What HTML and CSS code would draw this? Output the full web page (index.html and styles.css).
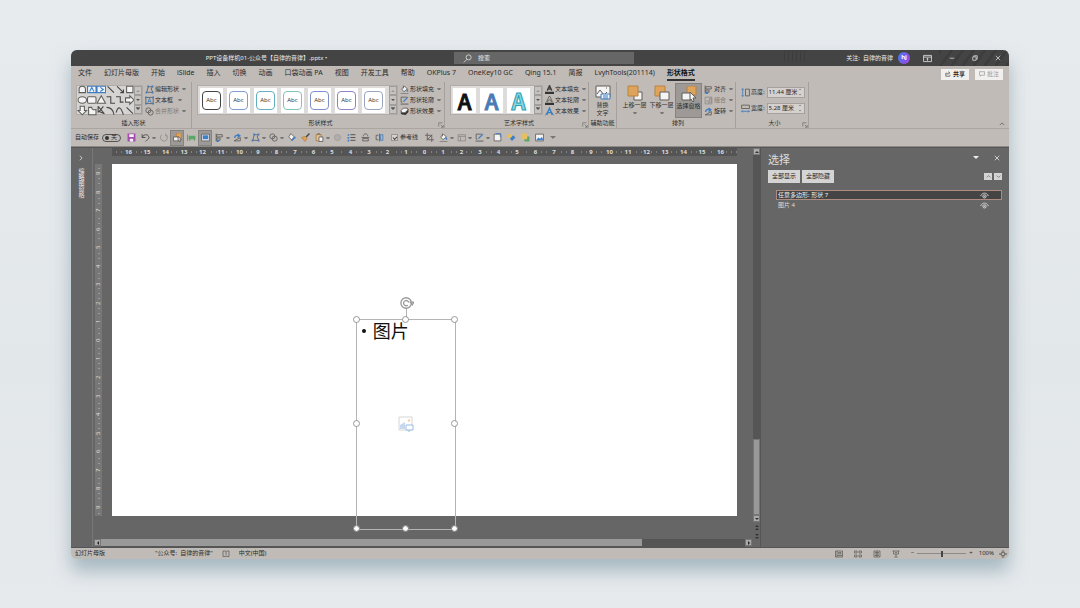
FILE: index.html
```html
<!DOCTYPE html>
<html lang="zh-CN">
<head>
<meta charset="utf-8">
<title>PPT设备样机01-公众号【自律的音律】.pptx</title>
<link rel="stylesheet" href="styles.css">
</head>
<body>
<svg class="sprite" aria-hidden="true">
  <symbol id="search" viewBox="0 0 16 16"><circle cx="10" cy="6" r="4.5"/><path d="M7 9.500 1.500 15"/></symbol>
  <symbol id="ribbonopt" viewBox="0 0 16 16"><path d="M1 2.500h14v11H1zM1 5.500h14M8 12V7.500M6 9.500l2-2 2 2"/></symbol>
  <symbol id="min" viewBox="0 0 16 16"><path d="M2 8.500h12"/></symbol>
  <symbol id="restore" viewBox="0 0 16 16"><path d="M2 5h9v9H2zM5 5V2h9v9h-3"/></symbol>
  <symbol id="close" viewBox="0 0 16 16"><path d="m2 2 12 12M14 2 2 14"/></symbol>
  <symbol id="share" viewBox="0 0 16 16"><path d="M6 6H2v8h11v-4M5 11c0-4 3-6 7-6M9 1.500 13 5 9 8.500"/></symbol>
  <symbol id="comment" viewBox="0 0 16 16"><path d="M1 2h14v9H7l-3 3v-3H1z"/></symbol>
  <symbol id="editshape" viewBox="0 0 16 16"><path d="M6 3h7l-2 4 3 6H3z"/><path class="bluef" d="M4 1h3v3H4zM12 1h3v3h-3zM1 12h3v3H1zM12 12h3v3h-3z"/></symbol>
  <symbol id="textbox" viewBox="0 0 16 16"><path d="M1.500 2.500h13v11h-13z"/><path class="blue" d="m5 12 3-8 3 8M6 9.500h4"/><path class="bluef" d="M0 1h3v3H0zM13 1h3v3h-3zM0 12h3v3H0zM13 12h3v3h-3z"/></symbol>
  <symbol id="merge" viewBox="0 0 16 16"><circle cx="6" cy="6" r="4.500"/><circle cx="10" cy="10" r="4.500"/></symbol>
  <symbol id="fill" viewBox="0 0 16 16"><path class="whitef" d="m8 2 5 5-6 5-4-5z"/><path d="M6 1v5"/><path class="bluef" d="M13 7c3 3 2 5 0 5s-2-3 0-5z"/><path class="greyf" d="M1 14h14v2H1z"/></symbol>
  <symbol id="outline" viewBox="0 0 16 16"><path d="M12 2H2v9h2"/><path class="blue thick" d="m6 10 8-8"/><path class="greyf" d="M1 13h14v3H1z"/></symbol>
  <symbol id="effect" viewBox="0 0 16 16"><path class="darkf" d="m1 8 6-2 8-3v6l-5 5-8-1z"/><path class="whitef" d="m2 6 4-4h7l1 3-5 5H3z"/></symbol>
  <symbol id="afill" viewBox="0 0 16 16"><path class="dark thick" d="m4 10 4-9 4 9M5 7h6"/><path class="darkf" d="M0 12h16v4H0z"/></symbol>
  <symbol id="aoutline" viewBox="0 0 16 16"><path d="m3 10 4-9h2l4 9h-2l-1-3H6l-1 3z"/><path class="darkf" d="M0 12h16v4H0z"/></symbol>
  <symbol id="aeffect" viewBox="0 0 16 16"><path class="blue thick" d="m3 14 5-12 5 12M5 10h6"/><path class="blue" d="m1 15 2-5M15 15l-2-5"/></symbol>
  <symbol id="alt" viewBox="0 0 16 16"><path class="whitef" d="M1 1h14v11H1z"/><path d="m2 9 3-4 4 5 3-3M11 3h1"/><path class="bluew" d="M6 9h9v5H6zM8 11h5M8 13h5"/></symbol>
  <symbol id="forward" viewBox="0 0 16 16"><path class="whitef" d="M7 7h8v8H7z"/><path class="orange" d="M1 1h10v10H1z"/></symbol>
  <symbol id="backward" viewBox="0 0 16 16"><path class="orange" d="M1 1h10v10H1z"/><path class="whitef" d="M6 7h9v8H6z"/></symbol>
  <symbol id="selpane" viewBox="0 0 16 16"><path class="orange" d="M6 0h9v9H6z"/><path class="whitef" d="M1 7h9v7H1z"/><path class="whitef" d="m9 6 6 6h-3l1 3-1 1-2-3-1 1z"/></symbol>
  <symbol id="align" viewBox="0 0 16 16"><path d="M2 1v14M3 3h10v4H3zM3 9h6v4H3z"/><path class="blue thick" d="M7 15H3M6 12l-3 3"/></symbol>
  <symbol id="group" viewBox="0 0 16 16"><path class="greyed" d="M2 2h12v12H2zM4 9h6V4h3v7H8v2"/></symbol>
  <symbol id="rotate" viewBox="0 0 16 16"><path d="m2 14 11-6v6z"/><path class="blue thick" d="M3 9c0-5 5-6 8-4M8 2l4 3-4 3"/></symbol>
  <symbol id="height" viewBox="0 0 16 16"><path d="M8 2h7v12H8z"/><path class="blue" d="M3 1v14M1 3l2-2 2 2M1 13l2 2 2-2"/></symbol>
  <symbol id="width" viewBox="0 0 16 16"><path d="M1 2h14v6H1z"/><path class="blue" d="M1 13h14M3 11l-2 2 2 2M13 11l2 2-2 2"/></symbol>
  <symbol id="launch" viewBox="0 0 16 16"><path d="M2 12V2h10M7 7l7 7M14 8v6H8"/></symbol>
  <symbol id="up" viewBox="0 0 16 16"><path d="m2 11 6-6 6 6"/></symbol>
  <symbol id="down" viewBox="0 0 16 16"><path d="m2 5 6 6 6-6"/></symbol>
  <symbol id="right" viewBox="0 0 16 16"><path d="m5 2 6 6-6 6"/></symbol>
  <symbol id="save" viewBox="0 0 16 16"><path class="purple" d="M1 1h14v14H1z"/><path class="whitefill" d="M4 2h8v5H4zM5 10h6v5H5z"/></symbol>
  <symbol id="undo" viewBox="0 0 16 16"><path class="dark" d="M2 2v6h6M2 8c4-8 12-5 12 0 0 4-4 4-6 7"/></symbol>
  <symbol id="redo" viewBox="0 0 16 16"><path class="greyed" d="M12 1v4h3M13 4c5 6-1 12-6 10S1 6 5 3"/></symbol>
  <symbol id="green" viewBox="0 0 16 16"><path class="greenf" d="M3 5h12v6H3z"/><path class="green" d="M1 3v11M5 14V9M13 14V9"/></symbol>
  <symbol id="screen" viewBox="0 0 16 16"><path class="whitef" d="M1 2h14v12H1z"/><path class="bluef" d="M3 4h10v7H3z"/></symbol>
  <symbol id="pen" viewBox="0 0 16 16"><path class="whitef" d="m7 1 6 6-5 5-5-5z"/><path class="blue thick" d="m8 14 7-7"/></symbol>
  <symbol id="brush" viewBox="0 0 16 16"><path class="orange" d="m1 8 6-2 4 4-4 5z"/><path class="dark thick" d="m9 7 6-6"/></symbol>
  <symbol id="paste" viewBox="0 0 16 16"><path class="tan" d="M2 3h9v11H2z"/><path class="whitef" d="M7 7h7v8H7z"/><path d="M4 3c0-3 5-3 5 0"/></symbol>
  <symbol id="dot" viewBox="0 0 16 16"><circle class="dim" cx="8" cy="8" r="5.500"/></symbol>
  <symbol id="list" viewBox="0 0 16 16"><path class="dark" d="M6 3h9M6 8h9M6 13h9"/><path class="bluef" d="M1 2h3v3H1zM1 7h3v3H1zM1 12h3v3H1z"/></symbol>
  <symbol id="flip" viewBox="0 0 16 16"><path d="M1 8h14M4 6c0-6 8-6 8 0M3 10h10v4H3z"/></symbol>
  <symbol id="fliph" viewBox="0 0 16 16"><path d="M8 1v14M6 4H2v8h4"/><path class="blue" d="M10 3h4v10h-4z"/></symbol>
  <symbol id="crop" viewBox="0 0 16 16"><path d="M4 0v12h12M0 4h12v12M3 13 13 3"/></symbol>
  <symbol id="table" viewBox="0 0 16 16"><path class="greyed" d="M2 3h13v11H2zM2 6h13M6 6v8"/></symbol>
  <symbol id="page" viewBox="0 0 16 16"><path class="whitef" d="M2 2h12v12H2z"/><path class="blue" d="M5 1h8v6"/></symbol>
  <symbol id="shapes" viewBox="0 0 16 16"><path class="gold" d="M1 2h8v7H1z"/><path class="bluef" d="m11 4 4 4-6 6-4-4z"/></symbol>
  <symbol id="layer" viewBox="0 0 16 16"><path class="greenf" d="M6 6h9v9H6z"/><path class="gold" d="M1 1h10v10H1z"/></symbol>
  <symbol id="picture" viewBox="0 0 16 16"><path class="whitef" d="M1 2h14v12H1z"/><path class="bluef" d="m2 13 4-5 3 2 3-3 2 3v3z"/></symbol>
  <symbol id="eye" viewBox="0 0 16 16"><path d="M1 9c3-7 11-7 14 0"/><circle cx="8" cy="9.500" r="3"/><circle cx="8" cy="9.500" r=".8"/></symbol>
  <symbol id="spell" viewBox="0 0 16 16"><path d="M8 3v8M2 2h5l1 1 1-1h5v11H9l-1 1-1-1H2z"/></symbol>
  <symbol id="normal" viewBox="0 0 16 16"><path d="M1 2h14v12H1zM4 2v12M4 11h11M7 5h5v3H7z"/></symbol>
  <symbol id="sorter" viewBox="0 0 16 16"><path d="M1 2h5v4H1zM10 2h5v4h-5zM1 10h5v4H1zM10 10h5v4h-5z"/></symbol>
  <symbol id="reading" viewBox="0 0 16 16"><path d="M2 2h12v12H2zM8 2v12M4 5h8M4 8h8M4 11h8"/></symbol>
  <symbol id="show" viewBox="0 0 16 16"><path d="M1 2h14M3 2v6h10V2M8 8v6M5 14h6M6 5h4"/></symbol>
  <symbol id="fit" viewBox="0 0 16 16"><path d="M8 1v14M1 8h14M6 3l2-2 2 2M6 13l2 2 2-2M3 6 1 8l2 2M13 6l2 2-2 2"/><path class="ribbonf" d="M5 5h6v6H5z"/></symbol>
  <symbol id="gallery" viewBox="0 0 54 30">
    <g class="whitef"><path d="M2 8V5q0-3 3-3t3 3v3zM47 2h6v6h-6z"/><ellipse cx="5" cy="15" rx="4" ry="3"/><rect x="10" y="12" width="8" height="6" rx="1"/><path d="m23 11 4 7h-8zM46 13h4v-2l4 4-4 4v-2h-4zM3 21h4v4h2l-4 4-4-4h2zM11 22h3q0 3 4 2v5h-7z"/></g>
    <path class="bluew" d="M10 2h8v6h-8zM19 2h8v6h-8z"/><path class="blue" d="m12 7 2-4 2 4M22 3l3 2-3 2"/>
    <path class="dark" d="m29 2 6 6M38 2l6 6M44 5v3h-3M28 12h4v6h4M37 12h4v5h3M20 21l6 7M25 21l-4 5 5 2M20 21v6M28 22q6 0 7 7M37 27q3-10 7 2M47 22l6 6"/>
  </symbol>
  <symbol id="placeholder" viewBox="0 0 16 16"><path class="phgrey" d="M1 1h13v13H1z"/><path class="phblue" d="M2 13V9l5-3v7z"/><circle class="phorange" cx="11" cy="4.500" r="1.200"/><path class="phline" d="M8 9h7v5H8zM11 14v2"/></symbol>
  <symbol id="spin" viewBox="0 0 16 16"><circle class="spinbg" cx="7" cy="8" r="6"/><path class="spinln" d="M9 10.500a3 3 0 1 1 1-3M12 7h4l-2 3z"/></symbol>
</svg>

<div class="window">
  <header class="titlebar">
    <div class="doc-title">PPT设备样机01-公众号【自律的音律】.pptx •</div>
    <label class="search"><svg class="icon"><use href="#search"/></svg><input type="text" placeholder="搜索" aria-label="搜索"></label>
    <div class="account">
      <span>关注:&nbsp; 自律的音律</span><span class="avatar">hj</span>
      <button aria-label="功能区显示选项"><svg class="icon"><use href="#ribbonopt"/></svg></button>
      <button aria-label="最小化"><svg class="icon small"><use href="#min"/></svg></button>
      <button aria-label="还原"><svg class="icon small"><use href="#restore"/></svg></button>
      <button aria-label="关闭"><svg class="icon small"><use href="#close"/></svg></button>
    </div>
  </header>

  <nav class="tabs">
    <button>文件</button><button>幻灯片母版</button><button>开始</button><button>iSlide</button><button>插入</button><button>切换</button><button>动画</button><button>口袋动画 PA</button><button>视图</button><button>开发工具</button><button>帮助</button><button>OKPlus 7</button><button>OneKey10 GC</button><button>Qing 15.1</button><button>简报</button><button>LvyhTools(201114)</button><button class="active">形状格式</button>
    <div class="tab-actions">
      <button class="strong"><svg class="icon small"><use href="#share"/></svg>共享</button>
      <button class="muted"><svg class="icon small"><use href="#comment"/></svg>批注</button>
    </div>
  </nav>

  <div class="ribbon">
    <section class="group insert">
      <div class="group-body">
        <div class="gallery shapes"><svg class="shape-grid"><use href="#gallery"/></svg>
          <div class="scroller"><button class="off" aria-label="上"></button><button aria-label="下"></button><button class="more" aria-label="更多"></button></div></div>
        <div class="stack">
          <button><svg class="icon"><use href="#editshape"/></svg>编辑形状<i class="caret"></i></button>
          <button><svg class="icon"><use href="#textbox"/></svg>文本框&nbsp;<i class="caret"></i></button>
          <button class="disabled"><svg class="icon"><use href="#merge"/></svg>合并形状<i class="caret"></i></button>
        </div>
      </div>
      <div class="group-label">插入形状</div>
    </section>
    <section class="group styles">
      <div class="group-body">
        <div class="gallery cards">
          <button class="card c1">Abc</button><button class="card c2">Abc</button><button class="card c3">Abc</button><button class="card c4">Abc</button><button class="card c5">Abc</button><button class="card c6">Abc</button><button class="card c7">Abc</button>
          <div class="scroller"><button class="off" aria-label="上"></button><button aria-label="下"></button><button class="more" aria-label="更多"></button></div>
        </div>
        <div class="stack">
          <button><svg class="icon"><use href="#fill"/></svg>形状填充<i class="caret"></i></button>
          <button><svg class="icon"><use href="#outline"/></svg>形状轮廓<i class="caret"></i></button>
          <button><svg class="icon"><use href="#effect"/></svg>形状效果<i class="caret"></i></button>
        </div>
      </div>
      <div class="group-label">形状样式<svg class="launcher"><use href="#launch"/></svg></div>
    </section>
    <section class="group wordart">
      <div class="group-body">
        <div class="gallery cards">
          <button class="letter w1">A</button><button class="letter w2">A</button><button class="letter w3">A</button>
          <div class="scroller"><button class="off" aria-label="上"></button><button aria-label="下"></button><button class="more" aria-label="更多"></button></div>
        </div>
        <div class="stack">
          <button><svg class="icon"><use href="#afill"/></svg>文本填充<i class="caret"></i></button>
          <button><svg class="icon"><use href="#aoutline"/></svg>文本轮廓<i class="caret"></i></button>
          <button><svg class="icon"><use href="#aeffect"/></svg>文本效果<i class="caret"></i></button>
        </div>
      </div>
      <div class="group-label">艺术字样式<svg class="launcher"><use href="#launch"/></svg></div>
    </section>
    <section class="group access">
      <div class="group-body"><button class="big"><svg><use href="#alt"/></svg>替换<br>文字</button></div>
      <div class="group-label">辅助功能</div>
    </section>
    <section class="group arrange">
      <div class="group-body">
        <button class="big"><svg><use href="#forward"/></svg>上移一层<i class="caret"></i></button>
        <button class="big"><svg><use href="#backward"/></svg>下移一层<i class="caret"></i></button>
        <button class="big pressed"><svg><use href="#selpane"/></svg>选择窗格</button>
        <div class="stack">
          <button><svg class="icon"><use href="#align"/></svg>对齐<i class="caret"></i></button>
          <button class="disabled"><svg class="icon"><use href="#group"/></svg>组合<i class="caret"></i></button>
          <button><svg class="icon"><use href="#rotate"/></svg>旋转<i class="caret"></i></button>
        </div>
      </div>
      <div class="group-label">排列</div>
    </section>
    <section class="group size">
      <div class="group-body">
        <label><svg class="icon"><use href="#height"/></svg>高度:<span class="spinbox"><input type="text" value="11.44 厘米"><span class="arrows"><svg><use href="#up"/></svg><svg><use href="#down"/></svg></span></span></label>
        <label><svg class="icon"><use href="#width"/></svg>宽度:<span class="spinbox"><input type="text" value="5.28 厘米"><span class="arrows"><svg><use href="#up"/></svg><svg><use href="#down"/></svg></span></span></label>
      </div>
      <div class="group-label">大小<svg class="launcher"><use href="#launch"/></svg></div>
    </section>
    <button class="collapse" aria-label="折叠功能区"><svg class="icon small"><use href="#up"/></svg></button>
  </div>

  <div class="quickbar">
    <label class="autosave">自动保存<span class="toggle"><input type="checkbox">关</span></label>
    <button aria-label="保存"><svg class="icon"><use href="#save"/></svg></button>
    <button aria-label="撤消"><svg class="icon"><use href="#undo"/></svg></button><i class="caret"></i>
    <button aria-label="重做"><svg class="icon"><use href="#redo"/></svg></button>
    <button class="pressed" aria-label="选择窗格"><svg class="icon"><use href="#selpane"/></svg></button>
    <button aria-label="动画"><svg class="icon"><use href="#green"/></svg></button>
    <button class="pressed" aria-label="母版"><svg class="icon"><use href="#screen"/></svg></button>
    <button aria-label="对齐"><svg class="icon"><use href="#align"/></svg></button><i class="caret"></i>
    <button aria-label="旋转"><svg class="icon"><use href="#rotate"/></svg></button><i class="caret"></i>
    <button aria-label="编辑形状"><svg class="icon"><use href="#editshape"/></svg></button><i class="caret"></i>
    <button aria-label="合并形状"><svg class="icon"><use href="#merge"/></svg></button><i class="caret"></i>
    <button aria-label="取色"><svg class="icon"><use href="#pen"/></svg></button>
    <button aria-label="格式刷"><svg class="icon"><use href="#brush"/></svg></button>
    <button aria-label="粘贴"><svg class="icon"><use href="#paste"/></svg></button><i class="caret"></i>
    <button aria-label="录制"><svg class="icon"><use href="#dot"/></svg></button>
    <button aria-label="列表"><svg class="icon"><use href="#list"/></svg></button>
    <button aria-label="垂直翻转"><svg class="icon"><use href="#flip"/></svg></button>
    <button aria-label="水平翻转"><svg class="icon"><use href="#fliph"/></svg></button>
    <label class="guides"><input type="checkbox" checked>参考线</label>
    <button aria-label="裁剪"><svg class="icon"><use href="#crop"/></svg></button>
    <button aria-label="填充"><svg class="icon"><use href="#fill"/></svg></button><i class="caret"></i>
    <button aria-label="表格"><svg class="icon"><use href="#table"/></svg></button><i class="caret"></i>
    <button aria-label="轮廓"><svg class="icon"><use href="#outline"/></svg></button><i class="caret"></i>
    <button aria-label="页面"><svg class="icon"><use href="#page"/></svg></button>
    <button aria-label="形状"><svg class="icon"><use href="#shapes"/></svg></button>
    <button aria-label="图层"><svg class="icon"><use href="#layer"/></svg></button>
    <button aria-label="图片"><svg class="icon"><use href="#picture"/></svg></button>
    <button aria-label="自定义"><i class="caret wide"></i></button>
  </div>

  <main class="workspace">
    <aside class="thumbs"><svg class="icon small"><use href="#right"/></svg><span>缩略图窗格</span></aside>
    <div class="editor">
      <div class="ruler-h"><span>16</span><span>15</span><span>14</span><span>13</span><span>12</span><span>11</span><span>10</span><span>9</span><span>8</span><span>7</span><span>6</span><span>5</span><span>4</span><span>3</span><span>2</span><span>1</span><span>0</span><span>1</span><span>2</span><span>3</span><span>4</span><span>5</span><span>6</span><span>7</span><span>8</span><span>9</span><span>10</span><span>11</span><span>12</span><span>13</span><span>14</span><span>15</span><span>16</span></div>
      <div class="canvas">
        <div class="ruler-v"><span>9</span><span>8</span><span>7</span><span>6</span><span>5</span><span>4</span><span>3</span><span>2</span><span>1</span><span>0</span><span>1</span><span>2</span><span>3</span><span>4</span><span>5</span><span>6</span><span>7</span><span>8</span><span>9</span></div>
        <div class="slide">
          <div class="frame">
            <p>图片</p>
            <svg class="ph"><use href="#placeholder"/></svg>
            <svg class="spin"><use href="#spin"/></svg>
            <b class="h n w"></b><b class="h n c"></b><b class="h n e"></b><b class="h m w"></b><b class="h m e"></b><b class="h s w"></b><b class="h s c"></b><b class="h s e"></b>
          </div>
        </div>
      </div>
      <div class="scroll-h"><button aria-label="左"><i class="tri left"></i></button><div class="track"><div class="thumb"></div></div><button aria-label="右"><i class="tri right"></i></button></div>
    </div>
    <div class="scroll-v"><button aria-label="上"><i class="tri up"></i></button><div class="track"><div class="thumb"></div></div><button aria-label="下"><i class="tri"></i></button>
      <div class="pager"><i class="tri up"></i><i class="tri up"></i><i class="tri gap"></i><i class="tri"></i></div></div>
    <aside class="pane">
      <div class="pane-head"><h2>选择</h2><i class="tri"></i><button aria-label="关闭"><svg class="icon small"><use href="#close"/></svg></button></div>
      <div class="pane-actions"><button>全部显示</button><button>全部隐藏</button><div class="order"><button aria-label="上移"><svg><use href="#up"/></svg></button><button aria-label="下移"><svg><use href="#down"/></svg></button></div></div>
      <ul>
        <li class="selected"><span>任意多边形: 形状 7</span><svg class="icon"><use href="#eye"/></svg></li>
        <li><span>图片 4</span><svg class="icon"><use href="#eye"/></svg></li>
      </ul>
    </aside>
  </main>

  <footer class="statusbar">
    <span class="mode">幻灯片母版</span><span>"公众号:&nbsp; 自律的音律"</span><svg class="icon"><use href="#spell"/></svg><span>中文(中国)</span>
    <div class="views"><svg class="icon"><use href="#normal"/></svg><svg class="icon"><use href="#sorter"/></svg><svg class="icon"><use href="#reading"/></svg><svg class="icon"><use href="#show"/></svg></div>
    <div class="zoom"><span>−</span><input type="range" min="0" max="100" value="50" aria-label="缩放"><span>+</span><span class="pct">100%</span><svg class="icon"><use href="#fit"/></svg></div>
  </footer>
</div>
</body>
</html>
```
FILE: styles.css
```css
* { box-sizing: border-box; }
body { margin: 0; padding: 50px 71px; background: linear-gradient(#e7ebee, #e2e7ea 60%, #e6eaed); font: 6px/9px "Noto Sans", "Noto Sans CJK SC", sans-serif; color: #2b2a29; }
button, input { font: inherit; color: inherit; border: 0; padding: 0; margin: 0; background: none; }
button { display: flex; align-items: center; justify-content: center; white-space: nowrap; }
.sprite { position: absolute; width: 0; height: 0; }
svg { fill: none; stroke: #5f5d59; stroke-width: 1.5; flex: none; }
.icon { width: 9px; height: 9px; }
.icon.small { width: 6px; height: 6px; stroke-width: 2; }
.blue { stroke: #3f7cc0; }
.thick { stroke-width: 2.500; }
.bluef { fill: #3f7fc8; stroke: none; }
.bluew { fill: #eef4fa; stroke: #3f7cc0; }
.whitef { fill: #f4f4f4; }
.whitefill { fill: #f4f4f4; stroke: none; }
.greyf { fill: #8b8987; stroke: none; }
.dark { stroke: #444; }
.darkf { fill: #333; stroke: none; }
.greyed { stroke: #8d8a87; }
.orange { fill: #dfa45c; stroke: #b98243; }
.tan { fill: #e6c495; stroke: #a97c45; }
.gold { fill: #e6bf62; stroke: none; }
.purple { fill: #a44cb0; stroke: none; }
.green { stroke: #4d9a5b; }
.greenf { fill: #5da66b; stroke: none; }
.dim { fill: #b1adaa; stroke: #a09c99; }
.ribbonf { fill: #c0bbb7; }

.window { border-radius: 6px; overflow: hidden; background: #c0bbb7; box-shadow: 0 12px 18px rgba(105, 135, 150, .5); }

.titlebar { display: grid; grid-template-columns: 383fr 180fr 375fr; align-items: center; height: 16px; background: #444; color: #eee; }
.titlebar svg { stroke: #ddd; }
.doc-title { text-align: center; padding-left: 8px; }
.search { display: flex; align-items: center; gap: 6px; height: 12px; padding-left: 9px; background: #666; }
.search input { flex: 1; min-width: 0; }
.search input::placeholder { color: #eee; opacity: 1; }
.account { display: flex; align-items: center; justify-content: flex-end; align-self: stretch; padding-right: 8px; gap: 17px; background: repeating-linear-gradient(125deg, #3d3d3d 0 3px, transparent 3px 9px) right / 70px 100% no-repeat, repeating-linear-gradient(90deg, #3d3d3d 0 1px, transparent 1px 4px) 150px 0 / 24px 12px no-repeat; }
.account > span:first-child { margin-right: -12px; }
.avatar { width: 12px; height: 12px; border-radius: 50%; background: linear-gradient(120deg, #3d7df0, #a843e0); color: #fff; font-weight: bold; text-align: center; line-height: 11px; margin-right: -4px; }

.tabs { display: flex; gap: 12px; height: 16px; padding: 0 6px 0 7px; font-size: 7px; }
.tabs > button { height: 15px; border-bottom: 2px solid transparent; }
.tabs > .active { font-weight: bold; border-color: #333; color: #111; }
.tab-actions { display: flex; align-items: center; gap: 6px; margin-left: auto; font-size: 6px; }
.tab-actions button { width: 28px; height: 11px; gap: 2px; background: #f1f0ef; }
.strong { font-weight: bold; }
.muted { color: #999; }
.muted svg { stroke: #999; }

.ribbon { display: flex; height: 47px; border-bottom: 1px solid #aaa5a1; }
.group { display: flex; flex-direction: column; border-right: 1px solid #a5a09c; }
.group-body { display: flex; height: 36px; align-items: center; }
.group-label { position: relative; text-align: center; height: 9px; line-height: 9px; margin-top: 1px; }
.launcher { position: absolute; right: 0; bottom: 0; width: 6px; height: 6px; }
.insert { padding-left: 5px; width: 121px; }
.styles { padding-left: 5px; width: 253px; }
.wordart { padding-left: 5px; width: 144px; }
.access { width: 28px; }
.access .group-body, .access .big { width: 100%; }
.arrange { padding-left: 4px; width: 119px; }
.size { padding-left: 5px; width: 73px; }
.gallery { display: flex; align-items: center; height: 30px; background: #d6d4d2; border: 1px solid #b0aca9; }
.shapes { width: 67px; }
.shape-grid { width: 57px; height: 32px; margin: -2px 0; stroke-width: 1; }
.gallery.cards { gap: 4px; padding-left: 2px; background: #dedcda; }
.scroller { display: flex; flex-direction: column; width: 8px; align-self: stretch; margin-left: auto; }
.scroller button { flex: 1; border: 1px solid #a29e9b; background: #c6c2bf; }
.scroller button::after { content: ""; border: 2px solid transparent; border-top-color: #555; border-bottom: 0; }
.scroller .off::after { border-top: 0; border-bottom: 2px solid #999; }
.scroller .more::after { box-shadow: 0 -1px #777; }
.card { width: 23px; height: 25px; background: #fff; position: relative; font-family: "Open Sans", sans-serif; }
.card::before { content: ""; position: absolute; inset: 3px 2px; border: 1px solid; border-radius: 4px; }
.c1::before { border-color: #444; }
.c2::before { border-color: #7f9ed0; }
.c3::before { border-color: #63afc0; }
.c4::before { border-color: #84c4b4; }
.c5::before { border-color: #7d90cc; }
.c6::before { border-color: #9283c4; }
.c7::before { border-color: #9aa6c0; }
.letter { width: 23px; height: 25px; background: #fff; font: 500 22px/25px "Noto Sans CJK SC", sans-serif; -webkit-text-stroke: 1px; }
.w1 { color: #111; }
.w2 { color: #4b7bb5; }
.w3 { color: #8ad6e0; -webkit-text-stroke: 1px #2ba0b4; font-weight: bold; }
.stack { display: flex; flex-direction: column; gap: 2px; padding-left: 2px; }
.stack button { height: 9px; justify-content: flex-start; gap: 1px; }
.disabled { color: #7d7976; }
.caret { width: 4px; border: 1px solid transparent; border-top: 2px solid #777; border-bottom: 0; margin-left: 2px; flex: none; }
.caret.wide { width: 6px; border-width: 3px 3px 0; margin: 0; }
.big { flex-direction: column; justify-content: flex-start; width: 27px; height: 35px; padding-top: 2px; line-height: 8px; }
.big svg { width: 16px; height: 16px; stroke-width: 1; }
.big .caret { margin: 3px 0 0; }
.pressed { background: #9c9997; border: 1px solid #858280; }
.size .group-body { flex-direction: column; align-items: flex-start; justify-content: center; gap: 6px; }
.size label { display: flex; align-items: center; gap: 1px; height: 10px; }
.spinbox { display: flex; align-items: center; width: 38px; height: 11px; margin-left: 1px; border: 1px solid #a5a19e; background: #d4d1cf; }
.spinbox input { width: 30px; padding-left: 1px; }
.arrows { display: flex; flex-direction: column; gap: 2px; }
.arrows svg { width: 4px; height: 3px; stroke-width: 3; }
.collapse { margin: auto 4px 1px auto; }

.quickbar { display: flex; align-items: center; height: 18px; padding-left: 4px; border-bottom: 1px solid #8e8a87; }
.quickbar button { width: 14px; height: 16px; }
.quickbar .caret { margin-left: 0; }
.autosave { display: flex; align-items: center; gap: 3px; margin-right: 3px; }
.toggle { display: flex; align-items: center; justify-content: space-between; width: 19px; height: 8px; padding: 0 3px 0 2px; border: 1px solid #55524f; border-radius: 4px; }
.toggle input { appearance: none; width: 4px; height: 4px; border-radius: 50%; background: #333; }
.guides { display: flex; align-items: center; gap: 2px; margin: 0 4px 0 5px; }
.guides input { appearance: none; width: 7px; height: 7px; border: 1px solid #99958f; background: #d6d3d0; position: relative; }
.guides input::after { content: ""; position: absolute; left: 1px; top: 1px; width: 3px; height: 2px; border: solid #444; border-width: 0 0 1px 1px; transform: rotate(-45deg); }

.workspace { display: flex; background: #666; color: #ddd; border-top: 1px solid #555; }
.thumbs { display: flex; flex-direction: column; align-items: center; gap: 7px; width: 22px; padding: 7px 2px 0 0; border-right: 1px solid #777; }
.thumbs svg { stroke: #eee; }
.thumbs span { writing-mode: vertical-rl; color: #eee; }
.editor { flex: 1; min-width: 0; display: flex; flex-direction: column; padding-left: 1px; }
.ruler-h { display: flex; justify-content: space-between; height: 8px; margin: 0 16px 8px 18px; padding: 0 12px; background: repeating-linear-gradient(90deg, transparent 0 4px, #808080 4px 5px) center / 100% 2px no-repeat #555; line-height: 8px; font-weight: bold; }
.ruler-h span { width: 9px; text-align: center; background: #555; }
.canvas { display: flex; gap: 10px; padding: 0 16px 23px 1px; }
.ruler-v { display: flex; flex-direction: column; justify-content: space-between; width: 7px; padding: 5px 0; background: repeating-linear-gradient(transparent 0 4px, #999 4px 5px) center / 2px 100% no-repeat #777; }
.ruler-v span { writing-mode: vertical-rl; transform: rotate(180deg); width: 7px; height: 8px; line-height: 7px; text-align: center; background: #777; }
.slide { flex: 1; aspect-ratio: 625 / 352; background: #fff; position: relative; color: #111; }
.frame { position: absolute; left: 39%; top: 44%; width: 16%; height: 60%; border: 1px solid #b4b4b4; }
.frame p { display: flex; align-items: center; gap: 7px; margin: 0 0 0 5px; font-size: 18px; line-height: 22px; }
.frame p::before { content: ""; width: 4px; height: 4px; border-radius: 50%; background: #111; }
.frame::before { content: ""; position: absolute; left: 50%; bottom: 100%; height: 12px; border-left: 1px solid #b4b4b4; }
.ph { position: absolute; left: 50%; top: 50%; width: 16px; height: 16px; margin: -8px; stroke-width: 1; }
.phgrey { stroke: #d6d6d6; }
.phblue { fill: #c6d8ee; stroke: none; }
.phorange { fill: #f2cf9c; stroke: none; }
.phline { stroke: #9bbbe0; fill: #fff; }
.spin { position: absolute; left: 50%; top: -24px; width: 14px; height: 14px; margin-left: -6px; }
.spinbg { stroke: #999; fill: #fff; }
.spinln { stroke: #999; }
.h { position: absolute; width: 5px; height: 5px; margin: -3px; border-radius: 50%; background: #fff; outline: 1px solid #999; }
.n { top: 0; }
.m { top: 50%; }
.s { top: 100%; }
.w { left: 0; }
.c { left: 50%; }
.e { left: 100%; }
.scroll-h { display: flex; height: 8px; margin-right: 1px; }
.scroll-h button, .scroll-v button { width: 7px; height: 7px; background: #aaa; border: 1px solid #777; }
.track { flex: 1; background: #555; }
.scroll-h .thumb { width: 84%; height: 7px; background: #999; }
.scroll-v { display: flex; flex-direction: column; width: 8px; padding-bottom: 8px; border-right: 1px solid #555; }
.scroll-v .track { display: flex; flex-direction: column; justify-content: flex-end; }
.scroll-v .thumb { height: 21%; background: #999; border: 1px solid #777; }
.pager { display: flex; flex-direction: column; align-items: center; gap: 1px; padding-top: 3px; }
.pager .gap { margin-top: 3px; }
.tri { border: 2px solid transparent; border-top-color: #333; border-bottom: 0; }
.tri.up { border-top: 0; border-bottom: 2px solid #333; }
.tri.left { border: 2px solid transparent; border-right-color: #222; border-left: 0; }
.tri.right { border: 2px solid transparent; border-left-color: #222; border-right: 0; }
.pane { width: 248px; padding: 4px 7px; }
.pane-head { display: flex; align-items: center; gap: 15px; height: 15px; }
.pane-head h2 { flex: 1; margin: 0; font-size: 11px; line-height: 15px; font-weight: normal; }
.pane-head .tri { border-width: 3px 3px 0; border-top-color: #eee; margin-bottom: 4px; }
.pane-head button { margin: 0 2px 4px 0; }
.pane-head svg { stroke: #eee; stroke-width: 3; }
.pane-actions { display: flex; gap: 2px; margin-top: 3px; color: #222; }
.pane-actions > button { width: 32px; height: 13px; background: #d4d4d4; }
.order { display: flex; align-items: center; gap: 2px; margin-left: auto; }
.order button { width: 8px; height: 7px; background: #d4d4d4; }
.order svg { width: 5px; height: 5px; stroke-width: 2; }
.pane ul { list-style: none; margin: 7px 0 0 8px; padding: 0; }
.pane li { display: flex; align-items: center; justify-content: space-between; height: 10px; padding: 0 12px 0 1px; border: 1px solid transparent; }
.pane li svg { stroke: #ddd; }
.pane .selected { background: #444; border-color: #b08c80; color: #eee; }

.statusbar { display: flex; align-items: center; height: 12px; padding: 0 2px 0 4px; gap: 9px; border-top: 1px solid #555; }
.statusbar .icon { width: 8px; height: 8px; }
.mode { margin-right: 41px; }
.views { display: flex; gap: 11px; margin: 0 2px 0 auto; }
.zoom { display: flex; align-items: center; gap: 3px; }
.zoom input { appearance: none; width: 49px; height: 1px; background: #8d8986; }
.zoom input::-webkit-slider-thumb { appearance: none; width: 2px; height: 6px; background: #444; }
.pct { margin: 0 2px 0 3px; }
```
